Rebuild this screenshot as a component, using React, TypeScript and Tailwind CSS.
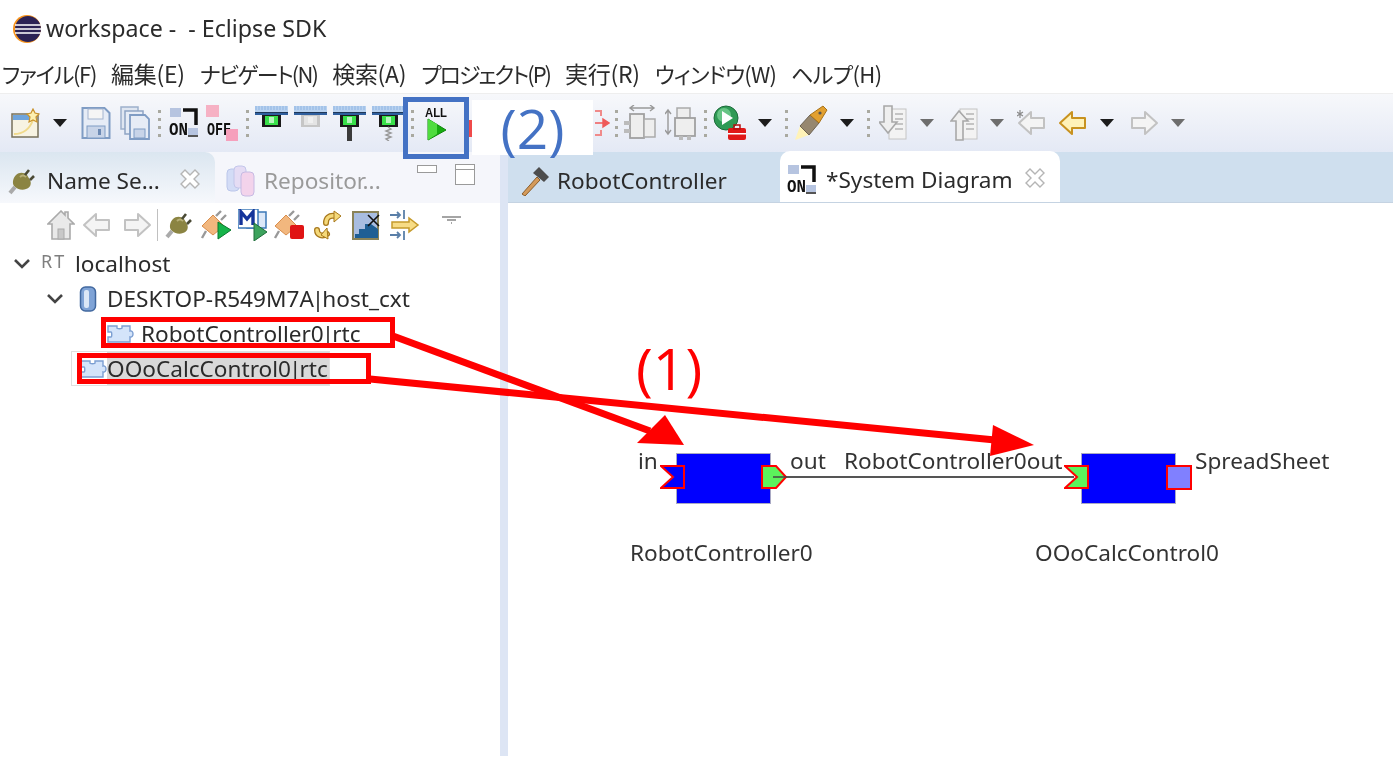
const sans = "font-['Noto_Sans','Open_Sans',sans-serif]";

function Caret({ gray, className }: { gray?: boolean; className?: string }) {
  return (
    <svg width="14" height="8" viewBox="0 0 14 8" className={className}>
      <path d="M0 0h14L7 8z" fill={gray ? '#6d6d6d' : '#1c1c1c'} />
    </svg>
  );
}

function Sep({ className }: { className?: string }) {
  return (
    <div className={`flex flex-col gap-[5px] ${className ?? ''}`}>
      <div className="w-[3px] h-[3px] bg-[#a9a9a0]" />
      <div className="w-[3px] h-[3px] bg-[#a9a9a0]" />
      <div className="w-[3px] h-[3px] bg-[#a9a9a0]" />
      <div className="w-[3px] h-[3px] bg-[#a9a9a0]" />
    </div>
  );
}

function OnIcon() {
  return (
    <svg width="30" height="36" viewBox="0 0 30 36">
      <rect x="1" y="3" width="11" height="9" fill="#b6c4e0" />
      <path d="M14 5h13v15" fill="none" stroke="#111" strokeWidth="3.5" />
      <text x="0" y="30" fontSize="18" fontWeight="700" fontFamily="Liberation Mono" fill="#111" textLength="19" lengthAdjust="spacingAndGlyphs">ON</text>
      <rect x="19" y="23" width="10" height="8" fill="#b6c4e0" />
      <rect x="19" y="30" width="10" height="2" fill="#555" />
    </svg>
  );
}

function OffIcon() {
  return (
    <svg width="32" height="38" viewBox="0 0 32 38">
      <rect x="0" y="1" width="13" height="12" fill="#f6b1c4" />
      <text x="1" y="31" fontSize="18" fontWeight="700" fontFamily="Liberation Mono" fill="#111" textLength="24" lengthAdjust="spacingAndGlyphs">OFF</text>
      <rect x="20" y="25" width="12" height="12" fill="#f6a0bc" />
    </svg>
  );
}

function NewIcon() {
  return (
    <svg width="30" height="30" viewBox="0 0 30 30">
      <rect x="1" y="6" width="26" height="23" fill="#f7f3e2" stroke="#77705a" strokeWidth="1.5" />
      <rect x="2" y="7" width="24" height="5" fill="#6fa4dc" />
      <path d="M3 26c10 0 16-6 19-14" fill="none" stroke="#f0d98a" strokeWidth="2" />
      <path d="M22 1l2 4 4 1-3 3 1 5-4-2-4 2 1-5-3-3 4-1z" fill="#fdf0b0" stroke="#c9922b" strokeWidth="1.2" />
    </svg>
  );
}

function SaveIcon() {
  return (
    <svg width="30" height="34" viewBox="0 0 30 34">
      <path d="M1.5 2h22l5 5v25h-27z" fill="#e6ecf6" stroke="#7f9cc4" strokeWidth="2" />
      <rect x="7" y="3" width="15" height="10" fill="#f5f5f5" stroke="#a3b4cf" />
      <rect x="6" y="20" width="18" height="12" fill="#c8d4e8" stroke="#7f9cc4" />
      <rect x="17" y="23" width="3" height="6" fill="#6d8ab4" />
    </svg>
  );
}

function SaveAllIcon() {
  return (
    <svg width="30" height="34" viewBox="0 0 30 34">
      <rect x="1" y="1" width="17" height="22" fill="#dfe6f1" stroke="#9db0cb" strokeWidth="1.5" />
      <rect x="5" y="5" width="18" height="23" fill="#e6ecf6" stroke="#8ea4c4" strokeWidth="1.5" />
      <path d="M10 9h15l4 4v20H10z" fill="#e6ecf6" stroke="#7f9cc4" strokeWidth="1.8" />
      <rect x="14" y="23" width="11" height="9" fill="#c8d4e8" stroke="#7f9cc4" />
    </svg>
  );
}

// the four connector buttons: stripes on top, a green or grey plug, optional stem
function PlugIcon({ gray, stem }: { gray?: boolean; stem?: 'solid' | 'spring' }) {
  return (
    <svg width="33" height="36" viewBox="0 0 33 36">
      <rect x="0" y="1" width="33" height="6" fill="#b8d2f0" />
      <path d="M0 2h33M0 4h33" stroke="#8fb4e2" strokeWidth="1" strokeDasharray="2 1" />
      <rect x="0" y="7" width="33" height="3" fill="#2f5f9e" />
      <rect x="0" y="7" width="33" height="1" fill="#111" opacity=".5" />
      <rect x="7" y="10" width="19" height="12" fill={gray ? '#c6c6c6' : '#1a1a1a'} />
      <rect x="10" y="11" width="13" height="9" fill={gray ? '#e4e4e4' : '#39e04a'} />
      <rect x="14" y="12" width="5" height="6" fill={gray ? '#f0f0f0' : '#b8f5be'} />
      {stem === 'solid' && <rect x="14" y="22" width="5" height="14" fill="#3b3b3b" />}
      {stem === 'spring' && <path d="M16 22l3 2-5 2 5 2-5 2 5 2-5 2 3 2" fill="none" stroke="#999" strokeWidth="1.4" />}
    </svg>
  );
}

function AllIcon() {
  return (
    <svg width="26" height="36" viewBox="0 0 26 36">
      <text x="1" y="12" fontSize="13" fontWeight="700" fontFamily="Liberation Sans" fill="#111" textLength="22" lengthAdjust="spacingAndGlyphs">ALL</text>
      <path d="M4 14l18 11-18 10z" fill="#16ac10" stroke="#0e860a" strokeWidth="1" />
      <path d="M4 14l9 5v10l-9 6z" fill="#4fdc3f" />
    </svg>
  );
}

function RedIcon() {
  return (
    <svg width="15" height="26" viewBox="0 0 15 26">
      <path d="M0 1h6v5M6 20v5H0" fill="none" stroke="#f08a8a" strokeWidth="2" />
      <path d="M0 13h8V9l6 4-6 4v-4" fill="#ef5a5a" stroke="#ef5a5a" strokeWidth="1.4" />
    </svg>
  );
}

function LayoutIcon({ vertical }: { vertical?: boolean }) {
  return vertical ? (
    <svg width="31" height="36" viewBox="0 0 31 36">
      <path d="M3 6v22M0 9l3-4 3 4M0 25l3 4 3-4" fill="none" stroke="#999" strokeWidth="1.4" />
      <rect x="12" y="3" width="13" height="10" fill="#eee" stroke="#aaa" strokeWidth="1.5" />
      <rect x="10" y="13" width="20" height="18" fill="#eee" stroke="#a0a0a0" strokeWidth="1.8" />
      <rect x="14" y="31" width="4" height="4" fill="#bbb" />
      <rect x="22" y="31" width="4" height="4" fill="#bbb" />
    </svg>
  ) : (
    <svg width="32" height="36" viewBox="0 0 32 36">
      <path d="M7 3h22M10 0L6 3l4 3M26 0l4 3-4 3" fill="none" stroke="#999" strokeWidth="1.4" />
      <rect x="6" y="9" width="14" height="24" fill="#eee" stroke="#a0a0a0" strokeWidth="1.8" />
      <rect x="20" y="14" width="11" height="18" fill="#eee" stroke="#aaa" strokeWidth="1.5" />
      <rect x="0" y="16" width="6" height="4" fill="#bbb" />
      <rect x="0" y="24" width="6" height="4" fill="#bbb" />
    </svg>
  );
}

function RunIcon() {
  return (
    <svg width="34" height="36" viewBox="0 0 34 36">
      <circle cx="13" cy="13" r="12" fill="#2f9a55" stroke="#1c6a3a" />
      <circle cx="11" cy="10" r="7" fill="#7fd69a" opacity=".7" />
      <path d="M9 6l11 7-11 7z" fill="#fff" />
      <rect x="15" y="23" width="18" height="12" rx="2" fill="#e01818" />
      <rect x="21" y="20" width="6" height="4" fill="none" stroke="#b51010" strokeWidth="1.5" />
      <rect x="15" y="28" width="18" height="1.5" fill="#fff" />
    </svg>
  );
}

function PenIcon() {
  return (
    <svg width="33" height="36" viewBox="0 0 33 36">
      <path d="M0 35l5-14 9 9z" fill="#fff3b8" />
      <path d="M5 21l10-11 9 8-10 12z" fill="#96876f" stroke="#6d6352" />
      <path d="M15 10l13-9 4 4-8 13z" fill="#e2a030" stroke="#a87218" />
      <circle cx="25" cy="8" r="1.6" fill="#555" />
    </svg>
  );
}

function DocArrowIcon({ up }: { up?: boolean }) {
  return (
    <svg width="28" height="36" viewBox="0 0 28 36">
      <rect x="10" y="4" width="17" height="30" fill="#f3f3f3" stroke="#c4c4c4" />
      <path d="M16 9h8M16 14h8M16 19h8M16 24h8" stroke="#b5b5b5" strokeWidth="1.4" />
      {up ? (
        <path d="M9 6L1 16h5v19h7V16h5z" fill="#efefef" stroke="#a8a8a8" strokeWidth="1.6" />
      ) : (
        <path d="M5 1h8v16h5l-9 11L0 17h5z" fill="#efefef" stroke="#a8a8a8" strokeWidth="1.6" />
      )}
    </svg>
  );
}

function NavArrow({ dir, color = '#c2c2c2', fill = '#f4f4f4', star }: { dir: 'l' | 'r'; color?: string; fill?: string; star?: boolean }) {
  return (
    <svg width="30" height="26" viewBox="0 0 30 26">
      <path
        d={dir === 'l' ? 'M14 2L2 13l12 11v-6h13V8H14z' : 'M16 2l12 11-12 11v-6H3V8h13z'}
        fill={fill}
        stroke={color}
        strokeWidth="2"
        strokeLinejoin="round"
      />
      {star && <path d="M3 0v8M0 2l6 4M6 2L0 6" stroke="#8a8a8a" strokeWidth="1.2" />}
    </svg>
  );
}

function PlugSmall() {
  return (
    <svg width="27" height="27" viewBox="0 0 27 27">
      <path d="M8 7c3-3 8-3 11 0l3 5c2 4 0 8-4 9-4 2-9 0-12-3-2-3-1-8 2-11z" fill="#8b8442" />
      <path d="M12 9c2-2 4-2 6 0" stroke="#b8b078" strokeWidth="2" fill="none" />
      <path d="M17 7l4-5M22 12l4-4" stroke="#4a4a35" strokeWidth="2.6" />
      <path d="M7 19l-5 6" stroke="#aaa" strokeWidth="4" />
    </svg>
  );
}

function ActivateIcon({ badge }: { badge: 'play' | 'stop' }) {
  return (
    <svg width="32" height="30" viewBox="0 0 32 30">
      <path d="M2 16l11-11 11 11-11 9z" fill="#f2b77e" stroke="#d88d4d" />
      <path d="M16 6l5-5M21 10l5-5M6 21l-4 7" stroke="#999" strokeWidth="2.4" />
      {badge === 'play' ? (
        <path d="M18 12l13 8-13 9z" fill="#16b44a" stroke="#0b7a2f" />
      ) : (
        <rect x="17" y="15" width="14" height="14" rx="2" fill="#e01414" />
      )}
    </svg>
  );
}

function ManagerIcon() {
  return (
    <svg width="30" height="32" viewBox="0 0 30 32">
      <rect x="9" y="3" width="19" height="16" fill="#dce8f8" stroke="#3b78b8" strokeWidth="1.5" />
      <rect x="0" y="0" width="20" height="19" fill="#fff" stroke="#3b78b8" strokeWidth="1.5" />
      <path d="M3 16V3l6 7 6-7v13" fill="none" stroke="#15349a" strokeWidth="3.4" />
      <path d="M16 14l13 9-13 9z" fill="#3da35d" stroke="#1f6e3a" />
    </svg>
  );
}

function RefreshIcon() {
  return (
    <svg width="29" height="30" viewBox="0 0 29 30">
      <g fill="none" strokeLinecap="round">
        <path d="M13 13c0-5 3-8 9-7M4 20c0 5 5 7 10 4" stroke="#a8781c" strokeWidth="6" />
        <path d="M13 13c0-5 3-8 9-7M4 20c0 5 5 7 10 4" stroke="#f5d97a" strokeWidth="3.4" />
      </g>
      <path d="M21 1l7 5-7 6zM14 18l1 11-7-4z" fill="#f5d97a" stroke="#a8781c" />
    </svg>
  );
}

function ZoneIcon() {
  return (
    <svg width="29" height="29" viewBox="0 0 29 29">
      <rect x="1" y="1" width="25" height="27" fill="#a8bde0" stroke="#8a8358" strokeWidth="2" />
      <path d="M3 27v-4h4v-5h6v-5h6l7 5v9z" fill="#1f5f94" />
      <path d="M16 4l11 11M27 4L16 15" stroke="#111" strokeWidth="1.6" />
    </svg>
  );
}

function ArrowsIcon() {
  return (
    <svg width="31" height="30" viewBox="0 0 31 30">
      <path d="M1 5h10M8 2l3 3-3 3M15 0v9M1 25h10M8 22l3 3-3 3M15 21v9" fill="none" stroke="#5a7fa8" strokeWidth="1.8" />
      <path d="M3 12h17V8l9 7-9 7v-4H3z" fill="#f7dc85" stroke="#c59a2b" strokeWidth="1.5" />
    </svg>
  );
}

function HomeIcon() {
  return (
    <svg width="28" height="30" viewBox="0 0 28 30">
      <path d="M14 1L1 14h4v15h18V14h4L21 8V2h-3v3z" fill="#e9e9e9" stroke="#aaa" strokeWidth="1.6" />
      <rect x="11" y="19" width="6" height="10" fill="#c8c8c8" stroke="#aaa" />
    </svg>
  );
}

function Cylinder() {
  return (
    <svg width="18" height="26" viewBox="0 0 18 26">
      <rect x="1.5" y="1" width="15" height="24" rx="5" fill="#7fa3d6" stroke="#41689f" strokeWidth="1.5" />
      <rect x="5" y="4" width="5" height="18" rx="2" fill="#dbe7f7" />
    </svg>
  );
}

function Puzzle() {
  return (
    <svg width="28" height="20" viewBox="0 0 28 20">
      <path d="M1 2h9v2c0 1 5 1 5 0V2h8v5c4-1 4 7 0 6v5H1v-5h3c1 0 1-5 0-5H1z" fill="#d4e4fa" stroke="#7c9fd2" strokeWidth="1.4" />
    </svg>
  );
}

function Hammer() {
  return (
    <svg width="30" height="30" viewBox="0 0 30 30">
      <path d="M2 28L17 11l3 3L5 30z" fill="#d49a5a" stroke="#8a5d2b" />
      <path d="M13 7l6-6 10 10-5 5z" fill="#4d4d4d" />
    </svg>
  );
}

function DbTabIcon() {
  return (
    <svg width="30" height="32" viewBox="0 0 30 32" opacity=".55">
      <rect x="1" y="4" width="12" height="22" rx="4" fill="#b9c8f2" stroke="#8ba0dd" />
      <rect x="8" y="1" width="12" height="22" rx="4" fill="#d9c8f0" stroke="#9aa0dd" />
      <rect x="15" y="7" width="13" height="24" rx="4" fill="#f2b8df" stroke="#a08ad0" />
    </svg>
  );
}

function CloseX() {
  return (
    <svg width="22" height="22" viewBox="0 0 22 22">
      <path d="M2 6l4-4 5 5 5-5 4 4-5 5 5 5-4 4-5-5-5 5-4-4 5-5z" fill="#fff" stroke="#b5b5b5" strokeWidth="1.4" />
    </svg>
  );
}

function Node({ x, label, labelX, left, right }: { x: string; label: string; labelX: string; left: React.ReactNode; right: React.ReactNode }) {
  return (
    <>
      <div className={`absolute top-[453px] w-[95px] h-[51px] bg-[#0000ff] border border-[#a9a9c4] ${x}`} />
      {left}
      {right}
      <div className={`absolute top-[537px] text-[22.6px] leading-[32px] text-[#333] ${labelX}`}>{label}</div>
    </>
  );
}

function Bar() {
  return <span className="mx-[-2px]">|</span>;
}

export default function App() {
  return (
    <div className={`relative w-[1393px] h-[757px] bg-white overflow-hidden text-[#2b2b2b] blur-[0.4px] ${sans}`}>
      <div className="h-[57px] flex items-center pl-[12px]">
        <svg width="30" height="30" viewBox="0 0 30 30">
          <circle cx="15" cy="15" r="14" fill="#f7941e" />
          <circle cx="16" cy="15" r="13" fill="#2c2255" />
          <path d="M3 11h26M3 15h26M3 19h26" stroke="#fff" strokeWidth="1.6" />
        </svg>
        <span className="ml-[4px] text-[23.2px] whitespace-pre">workspace -  - Eclipse SDK</span>
      </div>

      <div className="h-[36px] flex items-center pl-[2px] pb-[3px] gap-[15px] text-[22px] tracking-[-0.3px] [font-feature-settings:'palt'] font-['Noto_Sans_CJK_JP','Noto_Sans',sans-serif]">
        <span className="tracking-[-1.3px]">ファイル(F)</span>
        <span className="text-[23px]">編集(E)</span>
        <span className="tracking-[-1.8px]">ナビゲート(N)</span>
        <span className="text-[23px]">検索(A)</span>
        <span className="tracking-[-2px]">プロジェクト(P)</span>
        <span className="text-[23px]">実行(R)</span>
        <span className="tracking-[-0.8px]">ウィンドウ(W)</span>
        <span className="tracking-[-0.6px]">ヘルプ(H)</span>
      </div>

      <div className="h-[59px] flex items-center bg-gradient-to-b from-[#f7f8fb] to-[#e4e9f5] border-t border-[#eeeeee]">
        <div className="ml-[11px]"><NewIcon /></div>
        <Caret className="ml-[12px]" />
        <div className="ml-[14px]"><SaveIcon /></div>
        <div className="ml-[9px]"><SaveAllIcon /></div>
        <Sep className="ml-[8px]" />
        <div className="ml-[8px]"><OnIcon /></div>
        <div className="ml-[7px]"><OffIcon /></div>
        <Sep className="ml-[8px]" />
        <div className="ml-[6px]"><PlugIcon /></div>
        <div className="ml-[6px]"><PlugIcon gray /></div>
        <div className="ml-[6px]"><PlugIcon stem="solid" /></div>
        <div className="ml-[6px]"><PlugIcon stem="spring" /></div>
        <Sep className="ml-[6px]" />
        <div className="ml-[10px]"><AllIcon /></div>
        <div className="ml-[17px] w-[148px] h-[36px] flex items-center justify-end pr-[5px]"><RedIcon /></div>
        <Sep />
        <div className="ml-[6px]"><LayoutIcon /></div>
        <div className="ml-[9px]"><LayoutIcon vertical /></div>
        <Sep className="ml-[8px]" />
        <div className="ml-[6px]"><RunIcon /></div>
        <Caret className="ml-[11px]" />
        <Sep className="ml-[13px]" />
        <div className="ml-[7px]"><PenIcon /></div>
        <Caret className="ml-[12px]" />
        <Sep className="ml-[13px]" />
        <div className="ml-[9px]"><DocArrowIcon /></div>
        <Caret gray className="ml-[13px]" />
        <div className="ml-[16px]"><DocArrowIcon up /></div>
        <Caret gray className="ml-[12px]" />
        <div className="ml-[13px]"><NavArrow dir="l" star /></div>
        <div className="ml-[11px]"><NavArrow dir="l" color="#c8921f" fill="#fff2b8" /></div>
        <Caret className="ml-[12px]" />
        <div className="ml-[15px]"><NavArrow dir="r" /></div>
        <Caret gray className="ml-[12px]" />
      </div>

      <div className="flex h-[604px]">
        <div className="w-[500px] flex flex-col">
          <div className="relative h-[51px] bg-[#f5f6fb] flex items-end">
            <div className="w-[215px] h-[51px] rounded-tr-[10px] bg-gradient-to-b from-[#dbe6f0] to-[#f6f8fc] flex items-center pl-[8px] pt-[7px]">
              <PlugSmall />
              <span className="ml-[12px] text-[22.6px] leading-[30px]">Name Se...</span>
              <span className="ml-[19px] -mt-[4px]"><CloseX /></span>
            </div>
            <div className="h-[51px] flex items-center pl-[11px] pt-[7px]">
              <DbTabIcon />
              <span className="ml-[8px] text-[22.6px] leading-[30px] text-[#9a9a9a]">Repositor...</span>
            </div>
            <div className="ml-auto flex items-start h-[51px] pt-[12px] pr-[25px] gap-[18px]">
              <div className="mt-[1px] w-[20px] h-[8px] border border-[#9a9a9a] bg-white" />
              <div className="w-[20px] h-[21px] border border-[#9a9a9a] bg-white"><div className="h-[5px] border-b border-[#9a9a9a]" /></div>
            </div>
          </div>

          <div className="h-[43px] flex items-center pl-[47px] pt-[1px]">
            <HomeIcon />
            <div className="ml-[7px]"><NavArrow dir="l" /></div>
            <div className="ml-[10px]"><NavArrow dir="r" /></div>
            <div className="ml-[5px] w-[1px] h-[32px] bg-[#c0c0c0]" />
            <div className="ml-[7px]"><PlugSmall /></div>
            <div className="ml-[8px]"><ActivateIcon badge="play" /></div>
            <div className="ml-[6px]"><ManagerIcon /></div>
            <div className="ml-[5px]"><ActivateIcon badge="stop" /></div>
            <div className="ml-[8px]"><RefreshIcon /></div>
            <div className="ml-[10px]"><ZoneIcon /></div>
            <div className="ml-[8px]"><ArrowsIcon /></div>
            <svg width="19" height="9" viewBox="0 0 19 9" className="ml-[22px] mb-[10px]"><path d="M0 1h19M5 4h9M9 7h1" stroke="#888" strokeWidth="1.4" /></svg>
          </div>

          <div className="flex flex-col text-[22.6px]">
            <div className="h-[35px] flex items-center pl-[14px]">
              <svg width="16" height="10" viewBox="0 0 16 10"><path d="M1 1l7 7 7-7" fill="none" stroke="#444" strokeWidth="2.6" /></svg>
              <span className="ml-[11px] w-[34px] text-[18px] leading-none tracking-[2px] text-[#7f7f7f] -mt-[6px]">RT</span>
              <span>localhost</span>
            </div>
            <div className="h-[35px] flex items-center pl-[47px]">
              <svg width="16" height="10" viewBox="0 0 16 10"><path d="M1 1l7 7 7-7" fill="none" stroke="#444" strokeWidth="2.6" /></svg>
              <div className="ml-[16px]"><Cylinder /></div>
              <span className="ml-[10px]">DESKTOP-R549M7A<Bar />host_cxt</span>
            </div>
            <div className="h-[35px] flex items-center pl-[107px]">
              <Puzzle />
              <span className="ml-[6px]">RobotController0<Bar />rtc</span>
            </div>
            <div className="h-[35px] flex items-center ml-[71px] w-[259px] border border-[#e0e0e0] pl-[8px]">
              <Puzzle />
              <span className="bg-[#d9d9d9] ml-[-1px] flex-1">OOoCalcControl0<Bar />rtc</span>
            </div>
          </div>
        </div>

        <div className="w-[8px] bg-[#dde5f4]" />

        <div className="flex-1 flex flex-col">
          <div className="h-[51px] bg-[#cfdfee] flex items-end border-b border-[#c5d3e2]">
            <div className="h-[50px] w-[272px] flex items-center pl-[12px] pt-[7px]">
              <Hammer />
              <span className="ml-[7px] text-[22.6px] leading-[30px]">RobotController</span>
            </div>
            <div className="h-[51px] w-[280px] bg-white rounded-t-[10px] flex items-center pl-[7px] pt-[7px]">
              <OnIcon />
              <span className="ml-[9px] text-[22.6px] leading-[30px]">*System Diagram</span>
              <span className="ml-[11px] -mt-[4px]"><CloseX /></span>
            </div>
          </div>
        </div>
      </div>

      {/* white patch and blue box the annotator laid over the toolbar */}
      <div className="absolute left-[469px] top-[120px] w-[4px] h-[17px] bg-[#ef4a4a]" />
      <div className="absolute left-[472px] top-[100px] w-[121px] h-[55px] bg-white flex items-center justify-center text-[55px] leading-[55px] text-[#4472c4] font-['Open_Sans',sans-serif]">(2)</div>
      <div className="absolute left-[403px] top-[97px] w-[66px] h-[62px] border-[5px] border-[#4472c4]" />

      <div className="absolute left-[101px] top-[317px] w-[294px] h-[31px] border-[5px] border-[#ff0000]" />
      <div className="absolute left-[77px] top-[353px] w-[294px] h-[31px] border-[5px] border-[#ff0000]" />

      {/* diagram canvas */}
      <div className="absolute left-[774px] top-[476px] w-[300px] h-[2px] bg-[#555]" />
      <Node
        x="left-[676px]"
        labelX="left-[630px]"
        label="RobotController0"
        left={
          <svg width="26" height="26" viewBox="0 0 26 26" className="absolute left-[660px] top-[464px]">
            <path d="M1 2h23v22H1l12-11z" fill="#0000ff" stroke="#ff0000" strokeWidth="2" />
          </svg>
        }
        right={
          <svg width="27" height="26" viewBox="0 0 27 26" className="absolute left-[761px] top-[464px]">
            <path d="M1 2h14l10 11-10 11H1z" fill="#5cf25c" stroke="#ff0000" strokeWidth="2" />
            <path d="M12 13h14" stroke="#444" strokeWidth="1.5" />
          </svg>
        }
      />
      <Node
        x="left-[1081px]"
        labelX="left-[1035px]"
        label="OOoCalcControl0"
        left={
          <svg width="26" height="26" viewBox="0 0 26 26" className="absolute left-[1064px] top-[464px]">
            <path d="M1 2h23v22H1l12-11z" fill="#5cf25c" stroke="#ff0000" strokeWidth="2" />
          </svg>
        }
        right={<div className="absolute left-[1166px] top-[465px] w-[26px] h-[25px] bg-[#8080ff] border-2 border-[#ff0000]" />}
      />
      <div className="absolute left-[638px] top-[445px] text-[22.6px] leading-[32px] text-[#333]">in</div>
      <div className="absolute left-[790px] top-[445px] text-[22.6px] leading-[32px] text-[#333]">out</div>
      <div className="absolute left-[844px] top-[445px] text-[22.6px] leading-[32px] text-[#333]">RobotController0out</div>
      <div className="absolute left-[1195px] top-[445px] text-[22.6px] leading-[32px] text-[#333]">SpreadSheet</div>

      <div className="absolute left-[636px] top-[329px] text-[57px] leading-[78px] text-[#ff0000] font-['Open_Sans',sans-serif]">(1)</div>

      <svg width="1393" height="757" className="absolute left-0 top-0 pointer-events-none">
        <path d="M393 336L650 431" stroke="#ff0000" strokeWidth="7" />
        <path d="M684 445L637 443L665 415z" fill="#ff0000" />
        <path d="M370 379L995 440" stroke="#ff0000" strokeWidth="7" />
        <path d="M1034 445L990 456L993 425z" fill="#ff0000" />
      </svg>
    </div>
  );
}
